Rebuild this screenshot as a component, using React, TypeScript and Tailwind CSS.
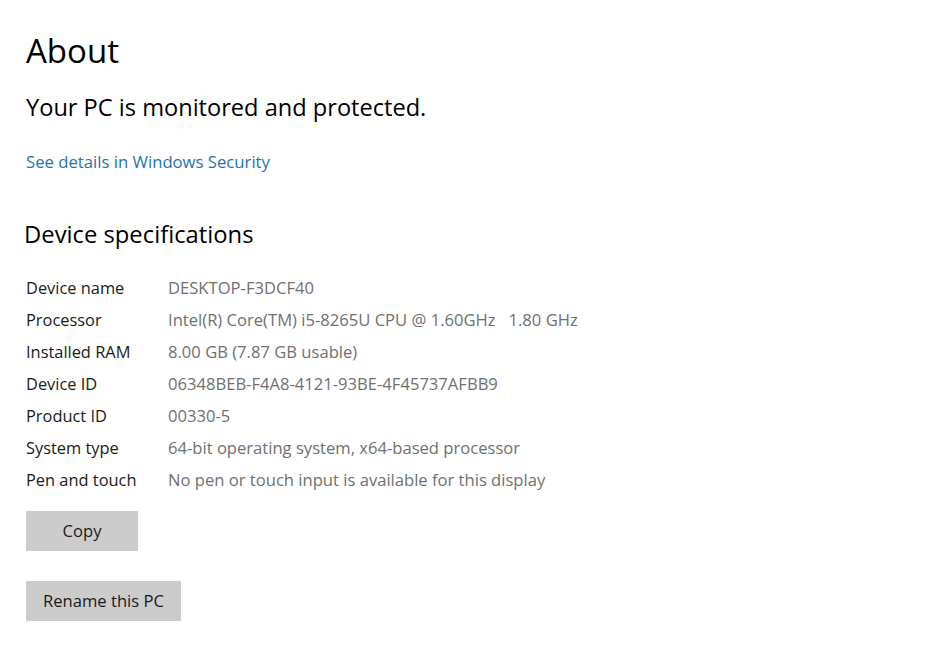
import React from "react";

const specs: [string, string][] = [
  ["Device name", "DESKTOP-F3DCF40"],
  ["Processor", "Intel(R) Core(TM) i5-8265U CPU @ 1.60GHz   1.80 GHz"],
  ["Installed RAM", "8.00 GB (7.87 GB usable)"],
  ["Device ID", "06348BEB-F4A8-4121-93BE-4F45737AFBB9"],
  ["Product ID", "00330-5"],
  ["System type", "64-bit operating system, x64-based processor"],
  ["Pen and touch", "No pen or touch input is available for this display"],
];

export default function App() {
  return (
    <div className="w-[938px] h-[656px] bg-white overflow-hidden font-['Segoe_UI','Open_Sans',sans-serif] text-[#000]">
      <div className="pl-[26px] pt-[28px]">
        <h1 className="text-[33px] leading-[46px] font-normal">About</h1>

        <p className="mt-[17px] text-[23.6px] leading-[32px]">Your PC is monitored and protected.</p>

        <a className="block mt-[27px] text-[16.7px] leading-[24px] text-[#1f73ad] cursor-pointer">
          See details in Windows Security
        </a>

        <h2 className="mt-[44px] -ml-[2px] text-[23.8px] leading-[32px] font-normal">Device specifications</h2>

        {/* spec table */}
        <div className="mt-[22px] flex flex-col">
          {specs.map(([label, value]) => (
            <div key={label} className="flex h-[32px] items-center">
              <span className="w-[142px] shrink-0 text-[16.4px] text-[#1a1a1a]">{label}</span>
              <span className="text-[16.6px] text-[#707070] whitespace-pre">{value}</span>
            </div>
          ))}
        </div>

        <button className="mt-[15px] block w-[112px] h-[40px] bg-[#cccccc] text-[16.6px] text-[#1a1a1a]">
          Copy
        </button>

        <button className="mt-[30px] block w-[155px] h-[40px] bg-[#cccccc] text-[16.6px] text-[#1a1a1a]">
          Rename this PC
        </button>
      </div>
    </div>
  );
}
